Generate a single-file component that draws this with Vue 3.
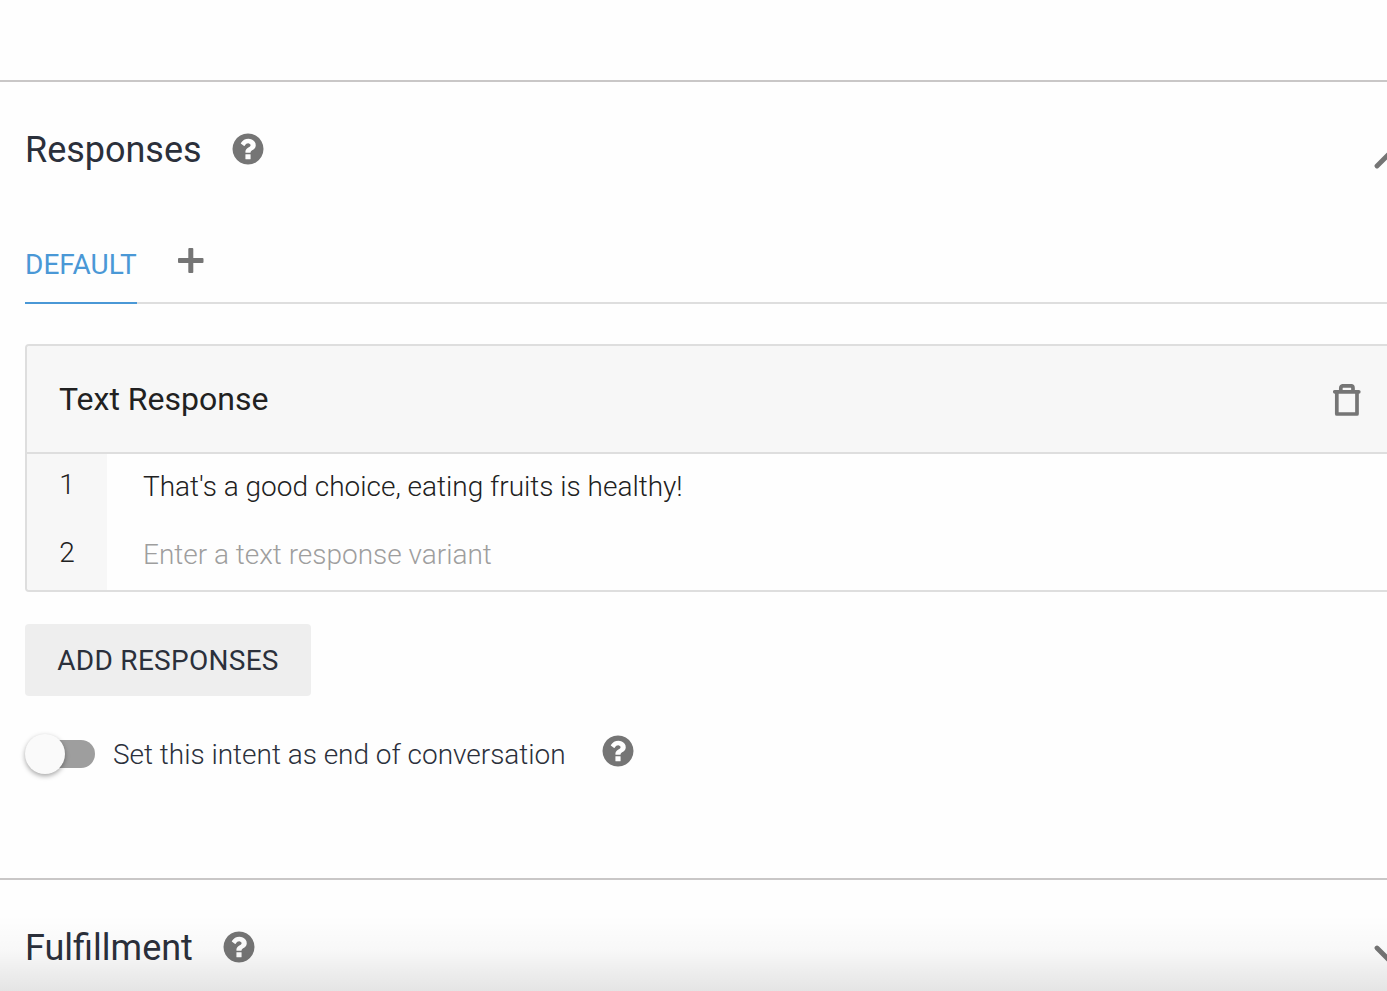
<script setup>
import { h } from 'vue'

const variants = [
  { id: 1, text: "That's a good choice, eating fruits is healthy!", empty: false },
  { id: 2, text: 'Enter a text response variant', empty: true },
]

const HelpIcon = () =>
  h('svg', { viewBox: '103 103 1586 1586', width: 32, height: 32 }, [
    h('path', {
      fill: '#757575',
      d: 'M1024 1376v-192q0-14-9-23t-23-9h-192q-14 0-23 9t-9 23v192q0 14 9 23t23 9h192q14 0 23-9t9-23zm256-672q0-88-55.5-163t-138.5-116-170-41q-243 0-371 213-15 24 8 42l132 100q7 6 19 6 16 0 25-12 53-68 86-92 34-24 86-24 48 0 85.5 26t37.5 59q0 38-20 61t-68 45q-63 28-115.5 86.5t-52.5 125.5v36q0 14 9 23t23 9h192q14 0 23-9t9-23q0-19 21.5-49.5t54.5-49.5q32-18 49-28.5t46-35 44.5-48 28-60.5 12.5-81zm384 192q0 209-103 385.5t-279.5 279.5-385.5 103-385.5-103-279.5-279.5-103-385.5 103-385.5 279.5-279.5 385.5-103 385.5 103 279.5 279.5 103 385.5z',
    }),
  ])
</script>

<template>
  <main class="page">
    <section class="section responses">
      <header class="heading">
        <h2 class="title title-responses">Responses</h2>
        <HelpIcon class="help" />
        <svg class="chevron up" width="44" height="28" viewBox="0 0 44 28">
          <path d="M4 24 L22 6 L40 24" />
        </svg>
      </header>

      <nav class="tabs">
        <span class="tab">DEFAULT</span>
        <svg class="plus" width="26" height="26" viewBox="0 0 26 26">
          <rect x="0" y="10" width="25.5" height="5" rx="1" />
          <rect x="10.3" y="0" width="5" height="25" rx="1" />
        </svg>
      </nav>

      <div class="card">
        <div class="card-head">
          <span class="card-title">Text Response</span>
          <svg class="trash" width="28" height="33" viewBox="0 0 28 33">
            <path d="M1.8 7.8H25.8M7.8 7.8V4.3Q7.8 1.8 10 1.8H18.2Q20 1.8 20 4.3V7.8" />
            <path d="M3.8 7.8V30H24V7.8" />
          </svg>
        </div>
        <div v-for="v in variants" :key="v.id" class="row">
          <span class="num">{{ v.id }}</span>
          <span class="variant" :class="{ empty: v.empty }">{{ v.text }}</span>
        </div>
      </div>

      <button class="add">ADD RESPONSES</button>

      <div class="end">
        <span class="switch"><span class="thumb"></span></span>
        <span class="end-label">Set this intent as end of conversation</span>
        <HelpIcon class="help" />
      </div>
    </section>

    <section class="section fulfillment">
      <header class="heading">
        <h2 class="title title-fulfillment">Fulfillment</h2>
        <HelpIcon class="help" />
        <svg class="chevron down" width="44" height="28" viewBox="0 0 44 28">
          <path d="M4 4 L22 22 L40 4" />
        </svg>
      </header>
    </section>
    <div class="fade"></div>
  </main>
</template>

<style>
body {
  margin: 0;
  background: #fefefe;
}
</style>

<style scoped>
.page {
  position: relative;
  box-sizing: border-box;
  height: 991px;
  padding-top: 80px;
  overflow: hidden;
  background: #fefefe;
  color: #2b303b;
  font-family: Roboto, "Noto Sans", sans-serif;
}
.section {
  box-sizing: border-box;
  border-top: 2px solid #c9c7c7;
  padding-left: 25px;
}
.responses {
  height: 798px;
}
.heading {
  display: flex;
  align-items: center;
  height: 136px;
  width: 1392px;
}
.title {
  margin: 0;
  font-size: 36px;
  line-height: 42px;
  font-weight: 400;
  letter-spacing: -0.02px;
  white-space: nowrap;
}
.title-responses {
  width: 207px;
}
.title-fulfillment {
  width: 198px;
  letter-spacing: normal;
}
.help {
  flex: none;
  margin-top: -2px;
}
.chevron {
  flex: none;
  margin-left: auto;
  fill: none;
  stroke: #757575;
  stroke-width: 4.8;
  stroke-linecap: round;
}
.up {
  margin-top: 12px;
}
.down {
  margin-top: 20px;
}
.tabs {
  display: flex;
  box-sizing: border-box;
  height: 86px;
  border-bottom: 2px solid #dedede;
}
.tab {
  box-sizing: border-box;
  width: 112px;
  height: 86px;
  padding-top: 30px;
  border-bottom: 2px solid #4a98d6;
  color: #4a98d6;
  font-size: 28px;
  line-height: 33px;
  white-space: nowrap;
}
.plus {
  margin: 30px 0 0 41px;
  fill: #757575;
}
.card {
  margin-top: 40px;
  border: 2px solid #dedede;
  border-right: 0;
  border-radius: 4px 0 0 4px;
  overflow: hidden;
}
.card-head {
  display: flex;
  align-items: center;
  height: 106px;
  padding: 0 26px 0 32px;
  border-bottom: 2px solid #dedede;
  background: #f7f7f7;
  color: #212121;
}
.card-title {
  font-size: 32px;
  line-height: 38px;
}
.trash {
  margin: 2px 0 0 auto;
  fill: none;
  stroke: #757575;
  stroke-width: 3.7;
  stroke-linecap: round;
  stroke-linejoin: round;
}
.row {
  display: flex;
  height: 68px;
  color: #212121;
  font-size: 28px;
  font-weight: 300;
  line-height: 66px;
}
.num {
  width: 80px;
  background: #f7f7f7;
  text-align: center;
  line-height: 62px;
}
.variant {
  padding-left: 36px;
  letter-spacing: -0.015px;
}
.empty {
  color: #9e9e9e;
}
.add {
  display: block;
  width: 286px;
  height: 72px;
  margin-top: 32px;
  padding: 2px 0 0;
  border: 0;
  border-radius: 4px;
  background: #eeeeee;
  color: #2b303b;
  font: 400 28px/70px Roboto, sans-serif;
  letter-spacing: 0.28px;
}
.end {
  display: flex;
  align-items: center;
  height: 40px;
  margin-top: 38px;
}
.switch {
  display: flex;
  align-items: center;
  width: 64px;
  height: 28px;
  margin-left: 6px;
  border-radius: 14px;
  background: #9e9e9e;
}
.thumb {
  flex: none;
  width: 40px;
  height: 40px;
  margin-left: -6px;
  border-radius: 50%;
  background: #fafafa;
  box-shadow: 0 2px 5px rgba(0, 0, 0, 0.35);
}
.end-label {
  width: 489px;
  margin-left: 18px;
  padding-top: 2px;
  font-size: 28px;
  font-weight: 300;
  line-height: 40px;
  letter-spacing: -0.02px;
  white-space: nowrap;
}
.end .help {
  margin-top: -6px;
}
.fade {
  position: absolute;
  right: 0;
  bottom: 0;
  left: 0;
  height: 76px;
  background: linear-gradient(rgba(0, 0, 0, 0), rgba(0, 0, 0, 0.025) 45%, rgba(0, 0, 0, 0.1));
}
</style>
